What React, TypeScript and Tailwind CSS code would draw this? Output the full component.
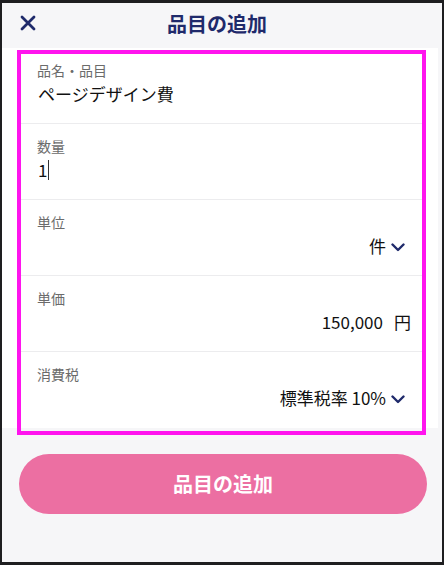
const font = { fontFamily: '"Noto Sans CJK JP", "Noto Sans", sans-serif' };

function Chevron() {
  return (
    <svg width="14" height="9" viewBox="0 0 14 9" className="ml-[5px] mt-[2px]">
      <polyline points="1.5,1.5 7,7 12.5,1.5" fill="none" stroke="#1f2a6b" strokeWidth="2.4" strokeLinecap="round" strokeLinejoin="round" />
    </svg>
  );
}

function Row({
  label,
  children,
  last,
}: {
  label: string;
  children: React.ReactNode;
  last?: boolean;
}) {
  return (
    <div
      className={
        "h-[76px] pl-[16px] pt-[12px] flex flex-col " +
        (last ? "" : "border-b border-[#ececee]")
      }
    >
      <div className="text-[14px] leading-[20px] text-[#6b6b6b]">{label}</div>
      <div className="mt-[1px]">{children}</div>
    </div>
  );
}

export default function App() {
  return (
    <div
      className="w-[444px] h-[565px] bg-[#1e1e20] pt-[3px] pl-[2px] pr-[2px] pb-[3px]"
      style={font}
    >
      <div className="h-full flex flex-col bg-[#f6f6f8] relative">
        {/* Header */}
        <div className="h-[45px] flex items-center relative shrink-0">
          <svg width="16" height="16" viewBox="0 0 16 16" className="absolute left-[18px] top-[12px]">
            <path d="M2 2 L14 14 M14 2 L2 14" stroke="#1f2a6b" strokeWidth="2.8" strokeLinecap="round" />
          </svg>
          <div className="w-full text-center text-[20px] font-bold text-[#1f2a6b] leading-[28px] -mt-[4px] pr-[10px]">
            品目の追加
          </div>
        </div>

        {/* Form */}
        <div className="bg-white mr-[4px] text-[#111]">
          <div className="ml-[19px] mr-[15px]">
            <Row label="品名・品目">
              <div className="text-[17px] leading-[26px] pl-[1px]">ページデザイン費</div>
            </Row>
            <Row label="数量">
              <div className="text-[17px] leading-[26px] pl-[1px] flex items-center">
                1<span className="inline-block w-[1px] h-[20px] bg-[#333] ml-[1px]" />
              </div>
            </Row>
            <Row label="単位">
              <div className="flex justify-end items-center text-[17px] leading-[26px] pr-[18px]">
                件
                <Chevron />
              </div>
            </Row>
            <Row label="単価">
              <div className="flex justify-end items-center text-[17px] leading-[26px] pr-[12px]">
                150,000<span className="ml-[11px]">円</span>
              </div>
            </Row>
            <Row label="消費税" last>
              <div className="flex justify-end items-center text-[17px] leading-[26px] pr-[18px]">
                標準税率 10%
                <Chevron />
              </div>
            </Row>
          </div>
        </div>

        {/* Highlight overlay */}
        <div className="absolute left-[15px] top-[47px] w-[409px] h-[385px] border-[4px] border-[#ff14ee] pointer-events-none" />

        {/* Button */}
        <div className="pl-[17px] pr-[15px] pt-[26px]">
          <button className="w-full h-[60px] rounded-full bg-[#ec6fa2] text-white text-[20px] font-bold">
            品目の追加
          </button>
        </div>
      </div>
    </div>
  );
}
